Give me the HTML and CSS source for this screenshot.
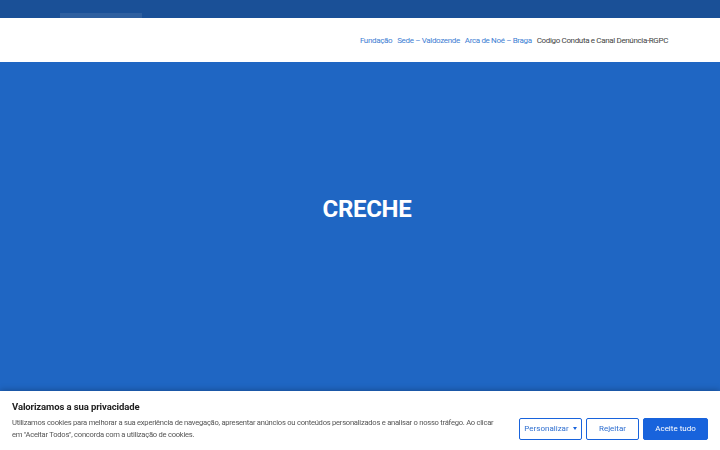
FILE: index.html
```html
<!DOCTYPE html>
<html lang="pt">
<head>
    <meta charset="UTF-8">
    <meta name="viewport" content="width=device-width, initial-scale=1.0">
    <title>Creche</title>
    <link rel="stylesheet" href="styles.css">
</head>
<body>
    <div class="top-bar">
        <div class="top-tab"></div>
    </div>
    <header class="site-header">
        <nav class="main-nav">
            <a href="#">Fundação</a>
            <a href="#">Sede – Valdozende</a>
            <a href="#">Arca de Noé – Braga</a>
            <a href="#" class="current">Codigo Conduta e Canal Denúncia-RGPC</a>
        </nav>
    </header>
    <section class="hero">
        <h1>CRECHE</h1>
    </section>

    <div class="cookie-banner">
        <div class="cookie-text">
            <p class="cookie-title">Valorizamos a sua privacidade</p>
            <p class="cookie-desc">Utilizamos cookies para melhorar a sua experiência de navegação, apresentar anúncios ou conteúdos personalizados e analisar o nosso tráfego. Ao clicar em "Aceitar Todos", concorda com a utilização de cookies.</p>
        </div>
        <div class="cookie-buttons">
            <button class="btn btn-outline btn-custom">Personalizar <span class="caret"></span></button>
            <button class="btn btn-outline btn-reject">Rejeitar</button>
            <button class="btn btn-primary">Aceite tudo</button>
        </div>
    </div>
</body>
</html>
```

FILE: styles.css
```css
body {
    margin: 0;
    height: 450px;
    overflow: hidden;
    font-family: Roboto, Arial, sans-serif;
    background-color: #ffffff;
}

.top-bar {
    height: 18px;
    background-color: #1a5097;
    display: flex;
    align-items: flex-end;
    padding-left: 60px;
}

.top-tab {
    width: 82px;
    height: 5px;
    background-color: #2e5f9f;
}

.site-header {
    height: 44px;
    display: flex;
    align-items: center;
    justify-content: flex-end;
    padding-right: 52px;
    box-sizing: border-box;
}

.main-nav {
    display: flex;
    gap: 5px;
}

.main-nav a {
    font-size: 8px;
    letter-spacing: -0.35px;
    color: #3d7ed3;
    text-decoration: none;
}

.main-nav a.current {
    color: #444444;
}

.hero {
    height: 330px;
    background-color: #1f66c3;
    display: flex;
    justify-content: center;
    align-items: flex-start;
    padding: 131px 0 0 14px;
    box-sizing: border-box;
}

.hero h1 {
    margin: 0;
    color: #ffffff;
    font-size: 24px;
    line-height: 32px;
    font-weight: 700;
    letter-spacing: -0.3px;
}

.cookie-banner {
    position: fixed;
    left: 0;
    right: 0;
    bottom: 0;
    height: 59px;
    background-color: #ffffff;
    box-shadow: 0 -1px 6px rgba(0, 0, 0, 0.25);
    display: flex;
    align-items: center;
    padding: 0 12px;
    box-sizing: border-box;
    gap: 20px;
}

.cookie-text {
    flex: 1;
}

.cookie-title {
    margin: 0 0 5px;
    font-size: 9.5px;
    font-weight: 700;
    letter-spacing: -0.1px;
    color: #212121;
}

.cookie-desc {
    margin: 0;
    font-size: 7.6px;
    letter-spacing: -0.25px;
    line-height: 12px;
    color: #555555;
}

.cookie-buttons {
    display: flex;
    gap: 4px;
    margin-top: 16px;
}

.btn {
    height: 22px;
    padding: 0 8px;
    font-family: inherit;
    font-size: 8px;
    border: 1.5px solid #1863dc;
    border-radius: 2px;
    background-color: #ffffff;
    color: #2f6fd0;
    cursor: pointer;
}

.btn-custom {
    width: 63px;
    padding: 0;
}

.btn-reject {
    width: 53px;
}

.btn-primary {
    width: 65px;
    background-color: #1863dc;
    color: #ffffff;
}

.caret {
    display: inline-block;
    width: 0;
    height: 0;
    margin-left: 2px;
    border-left: 2.5px solid transparent;
    border-right: 2.5px solid transparent;
    border-top: 3px solid #1863dc;
    vertical-align: middle;
}
```
